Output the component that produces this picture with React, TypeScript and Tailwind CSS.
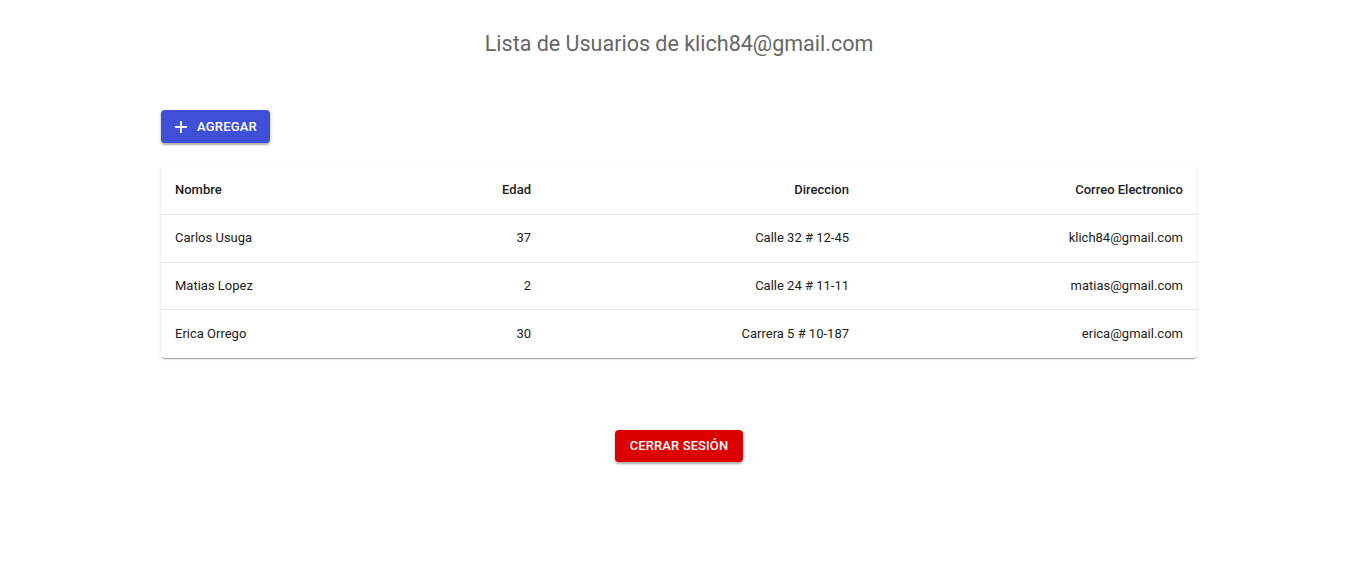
const usuarios = [
  { nombre: "Carlos Usuga", edad: 37, direccion: "Calle 32 # 12-45", correo: "klich84@gmail.com" },
  { nombre: "Matias Lopez", edad: 2, direccion: "Calle 24 # 11-11", correo: "matias@gmail.com" },
  { nombre: "Erica Orrego", edad: 30, direccion: "Carrera 5 # 10-187", correo: "erica@gmail.com" },
];

const rowHeights = ["h-[48px] border-b pb-[2px]", "h-[47px] border-b", "h-[48px] pb-[1px]"];

export default function App() {
  return (
    <div className="min-h-screen bg-white pl-[161px] pr-[165px] font-['Roboto',sans-serif] text-[#212121]">
      <h1 className="pt-[30px] text-center text-[21.5px] leading-[28px] text-[#666666]">
        Lista de Usuarios de klich84@gmail.com
      </h1>

      <div className="mt-[52px]">
        <button className="flex h-[33px] items-center gap-[9px] rounded-[4px] bg-[#3f4fd8] pl-[13px] pr-[13px] text-[13px] font-medium uppercase tracking-[0.2px] text-white shadow-[0_2px_2px_rgba(0,0,0,0.25),0_1px_4px_rgba(0,0,0,0.15)]">
          <svg width="14" height="14" viewBox="0 0 14 14" fill="none" stroke="white" strokeWidth="1.8">
            <path d="M7 1v12M1 7h12" />
          </svg>
          Agregar
        </button>
      </div>

      <div className="mt-[22px] rounded-[4px] bg-white shadow-[0_2px_1px_-1px_rgba(0,0,0,0.2),0_1px_1px_0_rgba(0,0,0,0.14),0_1px_3px_0_rgba(0,0,0,0.12)]">
        <div className="grid h-[50px] grid-cols-[200px_184px_318px_334px] items-center border-b border-[#e0e0e0] text-[13px] font-medium text-[#212121]">
          <div className="pl-[14px]">Nombre</div>
          <div className="pr-[14px] text-right">Edad</div>
          <div className="pr-[14px] text-right">Direccion</div>
          <div className="pr-[14px] text-right">Correo Electronico</div>
        </div>
        {usuarios.map((u, i) => (
          <div
            key={u.correo}
            className={`grid grid-cols-[200px_184px_318px_334px] items-center border-[#e0e0e0] text-[13px] ${rowHeights[i]}`}
          >
            <div className="pl-[14px]">{u.nombre}</div>
            <div className="pr-[14px] text-right">{u.edad}</div>
            <div className="pr-[14px] text-right">{u.direccion}</div>
            <div className="pr-[14px] text-right">{u.correo}</div>
          </div>
        ))}
      </div>

      <div className="mt-[72px] flex justify-center">
        <button className="flex h-[32px] items-center rounded-[4px] bg-[#dd0000] px-[15px] text-[13px] font-medium uppercase tracking-[0.1px] text-white shadow-[0_2px_2px_rgba(0,0,0,0.25),0_1px_4px_rgba(0,0,0,0.15)]">
          Cerrar Sesión
        </button>
      </div>
    </div>
  );
}
